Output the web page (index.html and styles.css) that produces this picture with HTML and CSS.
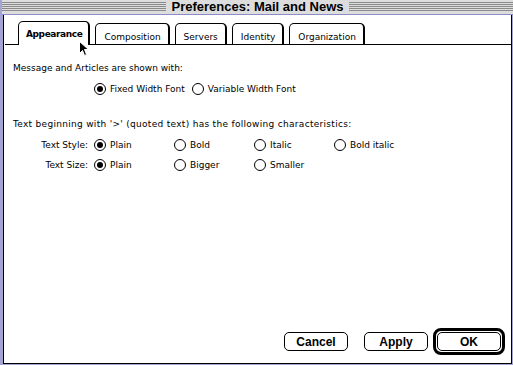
FILE: index.html
```html
<!DOCTYPE html>
<html lang="en">
<head>
  <meta charset="UTF-8" />
  <title>Preferences: Mail and News</title>
  <link rel="stylesheet" href="styles.css">
</head>
<body>
  <div class="window">
    <div class="titlebar">
      <span class="title">Preferences: Mail and News</span>
    </div>

    <div class="frame">
      <div class="tabs">
        <div class="tab active">Appearance</div>
        <div class="tab">Composition</div>
        <div class="tab">Servers</div>
        <div class="tab">Identity</div>
        <div class="tab">Organization</div>
      </div>

      <div class="panel">
        <p class="caption">Message and Articles are shown with:</p>
        <div class="choice-row">
          <label class="radio"><span class="mark on"></span>Fixed Width Font</label>
          <label class="radio"><span class="mark"></span>Variable Width Font</label>
        </div>

        <p class="caption quoted">Text beginning with '&gt;' (quoted text) has the following characteristics:</p>
        <div class="options">
          <span class="label">Text Style:</span>
          <label class="radio"><span class="mark on"></span>Plain</label>
          <label class="radio"><span class="mark"></span>Bold</label>
          <label class="radio"><span class="mark"></span>Italic</label>
          <label class="radio"><span class="mark"></span>Bold italic</label>

          <span class="label">Text Size:</span>
          <label class="radio"><span class="mark on"></span>Plain</label>
          <label class="radio"><span class="mark"></span>Bigger</label>
          <label class="radio"><span class="mark"></span>Smaller</label>
        </div>
      </div>

      <div class="buttons">
        <button class="btn cancel">Cancel</button>
        <button class="btn apply">Apply</button>
        <span class="default-ring"><button class="btn">OK</button></span>
      </div>
    </div>

    <!-- mouse pointer sitting on the tab -->
    <svg class="cursor" width="12" height="17" viewBox="0 0 12 17">
      <path d="M1.5 1.5 L1.5 13.5 L4.5 10.5 L6.5 15.5 L8.5 14.5 L6.5 9.5 L10.5 9.5 Z" fill="#000" stroke="#fff" stroke-width="1"/>
    </svg>
  </div>
</body>
</html>
```

FILE: styles.css
```css
body {
  margin: 0;
  background: #a4a4d4;
  font-family: "DejaVu Sans", Verdana, sans-serif;
  font-size: 9px;
  color: #000;
}

.window {
  position: relative;
  width: 513px;
  height: 365px;
  display: flex;
  flex-direction: column;
  background: #a4a4d4;
}

.titlebar {
  height: 14px;
  margin-left: 2px;
  display: flex;
  justify-content: center;
  align-items: center;
  background:
    repeating-linear-gradient(to bottom, #dddddd 0 1px, #8a8a8a 1px 2px) 0 1px / 100% 11px no-repeat,
    #dddddd;
  border-bottom: 1px solid #8c8cc8;
}

.title {
  padding: 0 6px;
  background: #dddddd;
  font-family: "Liberation Sans", Arial, sans-serif;
  font-weight: bold;
  font-size: 13px;
  line-height: 14px;
}

.frame {
  flex: 1;
  display: flex;
  flex-direction: column;
  margin: 0 1px 1px 3px;
  background: #fff;
  border: 1px solid #000;
  border-top: 0;
}

/* tabs */
.tabs {
  display: flex;
  align-items: flex-end;
  gap: 5px;
  height: 29px;
  margin: 0 0 0 1px;
  padding-left: 13px;
  border-bottom: 1px solid #000;
}

.tab {
  height: 21px;
  box-sizing: border-box;
  padding: 8px 7px 0 8px;
  line-height: 11px;
  border: 1px solid #000;
  border-right-width: 2px;
  border-bottom: 0;
  border-radius: 5px 5px 0 0;
  white-space: nowrap;
}

.tab.active {
  height: 24px;
  margin-bottom: -1px;
  padding: 7px 6px 0 7px;
  background: #fff;
  font-weight: bold;
  letter-spacing: -0.4px;
}

/* panel */
.panel {
  padding: 17px 0 0 9px;
}

.caption {
  margin: 0;
  line-height: 12px;
}

.caption.quoted {
  margin-top: 23px;
  letter-spacing: 0.3px;
}

.choice-row {
  display: flex;
  gap: 7px;
  margin-top: 9px;
  padding-left: 81px;
}

.radio {
  display: flex;
  align-items: center;
  gap: 4px;
  height: 12px;
  line-height: 12px;
  white-space: nowrap;
}

.mark {
  position: relative;
  width: 12px;
  height: 12px;
  box-sizing: border-box;
  border: 1px solid #000;
  border-radius: 50%;
  background: #fff;
}

.mark.on::after {
  content: "";
  position: absolute;
  left: 2px;
  top: 2px;
  width: 6px;
  height: 6px;
  border-radius: 50%;
  background: #000;
}

.options {
  display: grid;
  grid-template-columns: 81px repeat(4, 80px);
  row-gap: 8px;
  margin-top: 9px;
}

.label {
  text-align: right;
  padding-right: 6px;
  line-height: 12px;
}

/* buttons */
.buttons {
  margin-top: auto;
  display: flex;
  justify-content: flex-end;
  align-items: center;
  padding: 0 6px 8px 0;
}

.btn {
  width: 64px;
  height: 19px;
  padding: 0;
  background: #fff;
  border: 1px solid #000;
  border-radius: 5px;
  font-family: "Liberation Sans", Arial, sans-serif;
  font-weight: bold;
  font-size: 12px;
  color: #000;
}

.cancel {
  margin-right: 16px;
}

.apply {
  margin-right: 5px;
}

.default-ring {
  display: flex;
  padding: 1px;
  border: 3px solid #000;
  border-radius: 8px;
}

.cursor {
  position: absolute;
  left: 78px;
  top: 40px;
}
```
